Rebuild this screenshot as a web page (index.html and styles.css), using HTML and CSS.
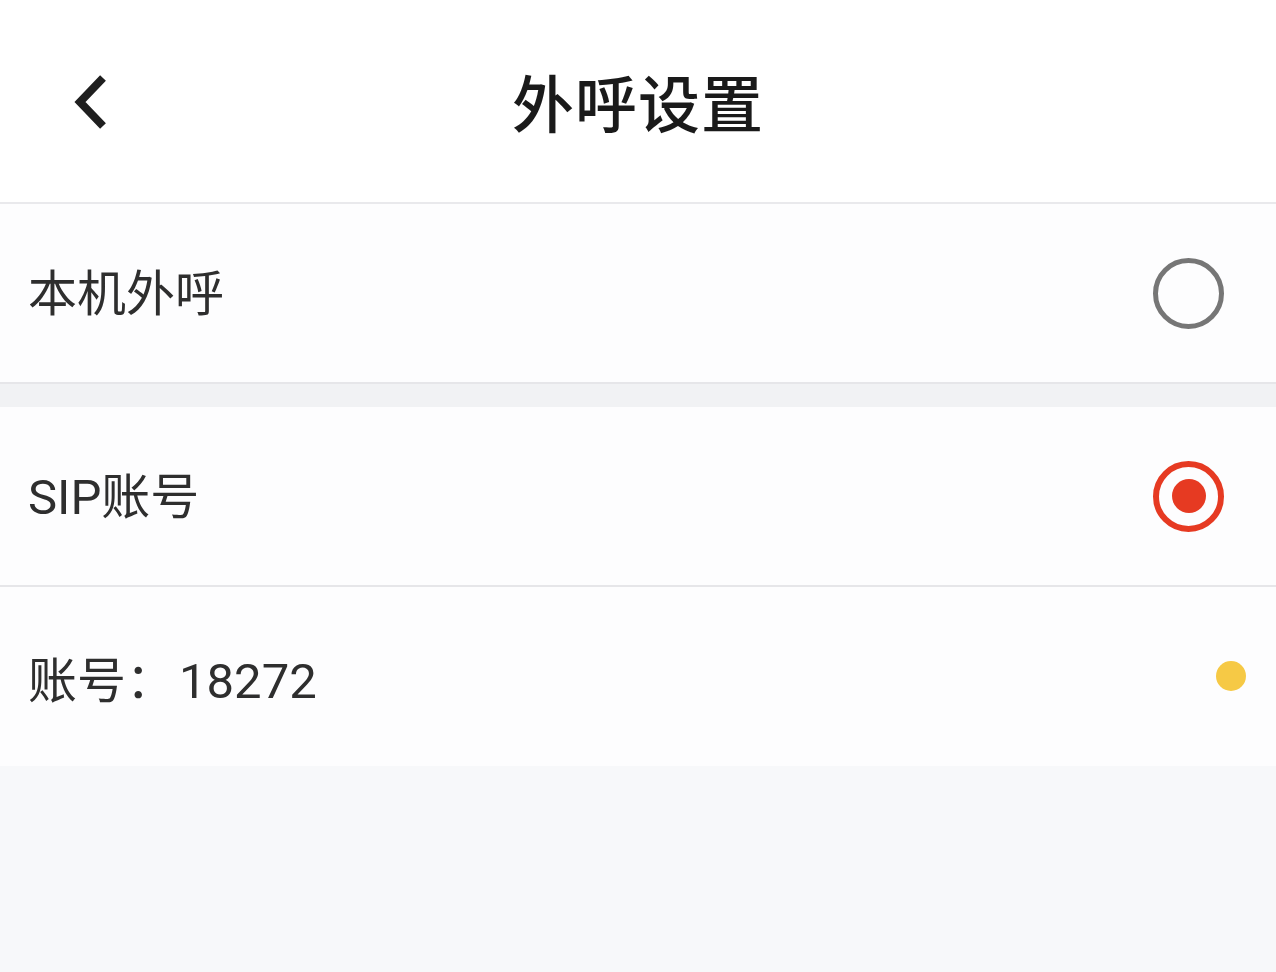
FILE: index.html
```html
<!DOCTYPE html>
<html lang="zh-CN">
<head>
  <meta charset="UTF-8">
  <title>外呼设置</title>
  <link rel="stylesheet" href="styles.css">
</head>
<body>
  <div class="page">
    <header class="nav-bar">
      <a class="back" href="#">
        <svg width="44" height="60" viewBox="0 0 44 60">
          <path d="M31 5 L8 29 L31 53" fill="none" stroke="#1f1f1f" stroke-width="8" stroke-linecap="butt" stroke-linejoin="miter"/>
        </svg>
      </a>
      <h1>外呼设置</h1>
    </header>

    <div class="group first">
      <div class="row">
        <span class="label">本机外呼</span>
        <span class="radio"></span>
      </div>
    </div>

    <div class="group">
      <div class="row">
        <span class="label">SIP账号</span>
        <span class="radio checked"></span>
      </div>
      <div class="row account">
        <span class="label">账号：<span class="num">18272</span></span>
        <span class="dot"></span>
      </div>
    </div>
  </div>
</body>
</html>
```

FILE: styles.css
```css
html, body {
  margin: 0;
  padding: 0;
}

body {
  font-family: Roboto, "Noto Sans CJK SC", sans-serif;
  background: #f7f8fa;
  color: #2e2e2e;
  min-height: 100vh;
}

.nav-bar {
  height: 202px;
  background: #fff;
  display: flex;
  align-items: center;
  justify-content: center;
  position: relative;
  border-bottom: 2px solid #e9e9ec;
}

.nav-bar h1 {
  margin: 0;
  font-size: 62px;
  font-weight: 500;
  color: #1a1a1a;
  letter-spacing: 1px;
}

.nav-bar .back {
  position: absolute;
  left: 72px;
  top: 73px;
  display: block;
  line-height: 0;
}

.group {
  background: #fdfdfe;
}

.group.first {
  border-bottom: 2px solid #e6e6e9;
  margin-bottom: 23px;
  box-shadow: 0 23px 0 #f1f2f4;
}

.row {
  height: 178px;
  display: flex;
  align-items: center;
  justify-content: space-between;
  padding: 0 52px 0 28px;
  box-sizing: border-box;
}

.row + .row {
  border-top: 2px solid #e6e6e9;
}

.label {
  font-size: 49px;
  color: #2e2e2e;
  padding-bottom: 7px;
}

.radio {
  width: 71px;
  height: 71px;
  border: 5px solid #767676;
  border-radius: 50%;
  box-sizing: border-box;
  position: relative;
}

.radio.checked {
  border: 6px solid #e63a22;
}

.radio.checked::after {
  content: "";
  position: absolute;
  left: 50%;
  top: 50%;
  width: 34px;
  height: 34px;
  margin: -17px 0 0 -17px;
  border-radius: 50%;
  background: #e63a22;
}

.account {
  height: 181px;
  padding-right: 30px;
}

.account .label {
  padding-bottom: 0;
}

.account .num {
  margin-left: 4px;
}

.dot {
  width: 30px;
  height: 30px;
  border-radius: 50%;
  background: #f6c945;
  margin-top: -2px;
}
```
